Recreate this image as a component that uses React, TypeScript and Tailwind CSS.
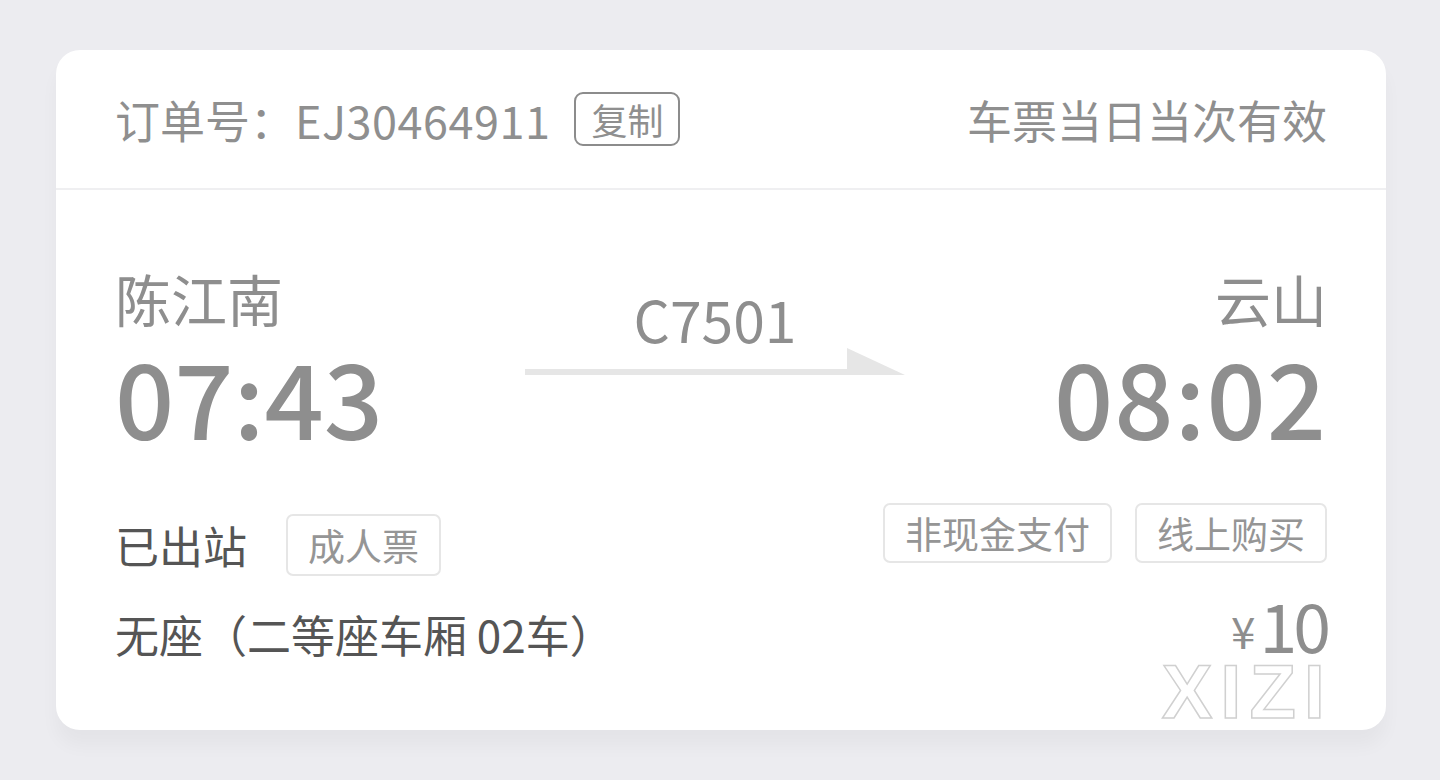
import React from 'react';

const cjk = { fontFamily: '"Noto Sans CJK SC", "Noto Sans", sans-serif' };

function Tag({ children, className = '' }: { children: React.ReactNode; className?: string }) {
  return (
    <span
      className={`flex h-[60px] items-center rounded-[7px] border-2 border-[#e6e6e6] px-[20px] text-[37px] leading-none text-[#959595] ${className}`}
    >
      {children}
    </span>
  );
}

export default function App() {
  return (
    <div className="min-h-[780px] w-[1440px] overflow-hidden bg-[#ececf0] pt-[50px] pl-[56px]" style={cjk}>
      {/* 车票卡片 */}
      <div className="relative h-[680px] w-[1330px] rounded-[24px] bg-white shadow-[0_16px_18px_rgba(0,0,0,0.035)]">
        {/* 订单号 */}
        <div className="flex h-[140px] items-center justify-between border-b-2 border-[#efeff1] px-[59px] text-[45px] leading-none text-[#8f8f8f]">
          <div className="flex items-center">
            <span>订单号：</span>
            <span className="tracking-[0.5px]">EJ30464911</span>
            <span className="ml-[24px] flex h-[54px] items-center rounded-[9px] border-2 border-[#8c8c8c] px-[15px] text-[36px]">
              复制
            </span>
          </div>
          <span>车票当日当次有效</span>
        </div>

        <div className="px-[59px] pt-[80px]">
          {/* 车站与时间 */}
          <div className="grid grid-cols-[410px_380px_1fr] text-[#8e8e8e]">
            <div>
              <div className="text-[56px] leading-none">陈江南</div>
              <div className="mt-[17px] text-[104px] font-medium leading-none">07:43</div>
            </div>
            <div className="flex flex-col items-center pt-[20px]">
              <div className="text-[57px] leading-none">C7501</div>
              <svg width="380" height="28" viewBox="0 0 380 28" className="mt-[1px] block">
                <rect x="0" y="21" width="330" height="6" fill="#e6e6e6" />
                <polygon points="322,0 380,27 322,27" fill="#e6e6e6" />
              </svg>
            </div>
            <div className="text-right">
              <div className="text-[56px] leading-none">云山</div>
              <div className="mt-[17px] text-[104px] font-medium leading-none tracking-[1px]">08:02</div>
            </div>
          </div>

          {/* 状态与标签 */}
          <div className="mt-[56px] flex items-start justify-between">
            <div className="mt-[11px] flex items-center gap-[39px]">
              <span className="text-[44px] leading-none text-[#555555]">已出站</span>
              <Tag className="h-[62px] text-[36px]">成人票</Tag>
            </div>
            <div className="flex items-center gap-[23px]">
              <Tag className="px-[19px]">非现金支付</Tag>
              <Tag className="px-[18px]">线上购买</Tag>
            </div>
          </div>

          {/* 座位与价格 */}
          <div className="mt-[14px] flex items-baseline justify-between">
            <span className="text-[44px] leading-none text-[#555555]">无座（二等座车厢 02车）</span>
            <span className="leading-none text-[#8e8e8e]">
              <span className="relative -top-[4px] mr-[4px] text-[44px]">¥</span>
              <span className="text-[68px] tracking-[-4px]">10</span>
            </span>
          </div>
        </div>

        {/* 水印 */}
        <div
          className="absolute right-[53px] top-[604px] text-[76px] font-bold leading-none tracking-[8px] text-transparent [-webkit-text-stroke:1.5px_#d0d0d0]"
          style={{ fontFamily: '"Liberation Sans", Arial, sans-serif' }}
        >
          XIZI
        </div>
      </div>
    </div>
  );
}
